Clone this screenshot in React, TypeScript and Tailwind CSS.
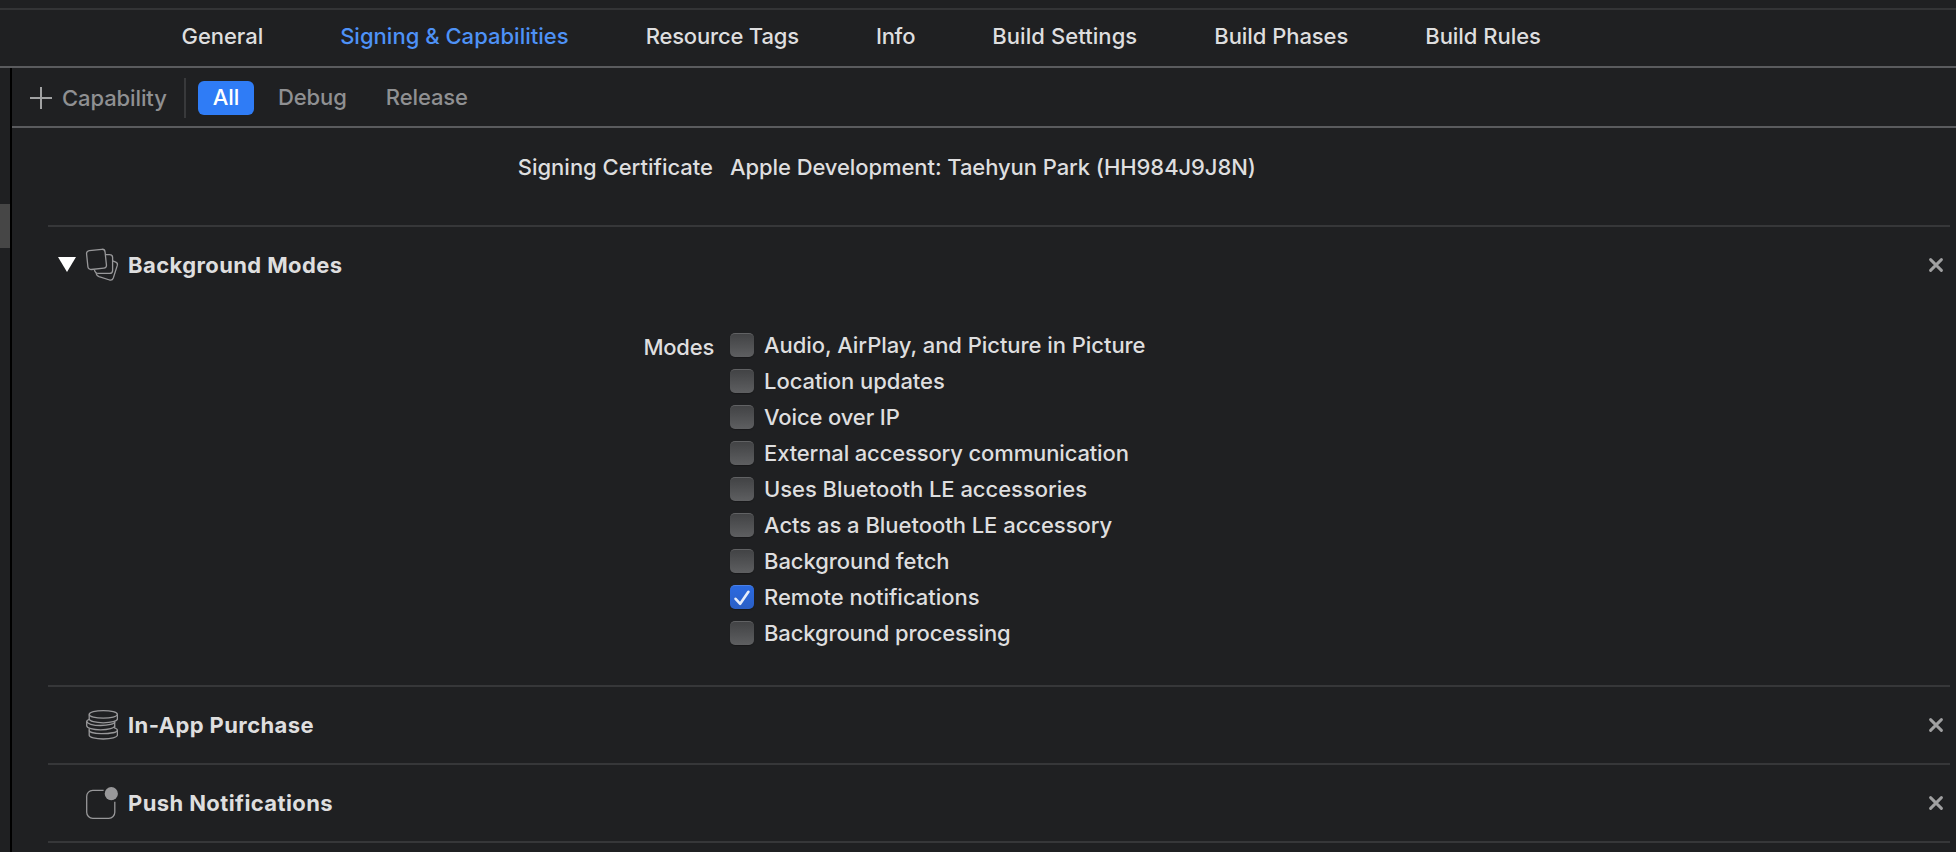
import { useState, type ReactNode } from 'react'
import clsx from 'clsx'

const tabs = [
  { label: 'General', className: 'tracking-[-0.05px]' },
  { label: 'Signing & Capabilities', className: 'tracking-[0.02px]' },
  { label: 'Resource Tags', className: 'tracking-[-0.18px]' },
  { label: 'Info', className: 'tracking-[-0.25px]' },
  { label: 'Build Settings', className: 'tracking-[0.08px]' },
  { label: 'Build Phases', className: 'tracking-[-0.06px]' },
  { label: 'Build Rules', className: 'tracking-[-0.04px]' },
]

const modes = [
  { label: 'Audio, AirPlay, and Picture in Picture', className: 'tracking-[-0.05px]' },
  { label: 'Location updates', className: 'tracking-[-0.05px]' },
  { label: 'Voice over IP', className: 'tracking-[-0.12px]' },
  { label: 'External accessory communication', className: 'tracking-[-0.14px]' },
  { label: 'Uses Bluetooth LE accessories', className: 'tracking-[-0.03px]' },
  { label: 'Acts as a Bluetooth LE accessory', className: 'tracking-[-0.03px]' },
  { label: 'Background fetch', className: 'tracking-[-0.05px]' },
  { label: 'Remote notifications', className: 'tracking-[-0.03px]' },
  { label: 'Background processing', className: 'tracking-[-0.12px]' },
]

function CardsIcon() {
  return (
    <svg width="32" height="32" viewBox="0 0 32 32" fill="none" stroke="#98989a" strokeWidth="1.3" className="overflow-visible">
      <rect x="1.2" y="0.9" width="18.6" height="19" rx="3" transform="rotate(-6 10.5 10.4)" />
      <path d="M20 5.6h3.6a3 3 0 0 1 3 3v12.8a3 3 0 0 1-3 3H12.4Q9.2 24.4 8.4 20.8" />
      <path d="M26.6 11.8l3.2 1.3Q32 14 31.3 16.4L27.3 29Q26.3 31.7 23.6 31L13 27.6Q10.8 26.8 10 24.2" />
    </svg>
  )
}

function CoinsIcon() {
  return (
    <svg width="32" height="32" viewBox="0 0 32 32" fill="none" stroke="#98989a" strokeWidth="1.3">
      <ellipse cx="17.3" cy="5.4" rx="14.1" ry="3.8" />
      <path d="M3.2 5.4v4.6c0 2.1 6.3 3.8 14.1 3.8s14.1-1.7 14.1-3.8V5.4" />
      <path d="M3.2 10.3C1.5 10.9.7 11.6.7 12.3c0 2.3 6.2 4.2 13.9 4.2s14.1-1.7 14.1-3.6" />
      <path d="M.7 12.3v4.5c0 2.3 6.2 4.1 13.9 4.1s14.1-1.8 14.1-4.1v-4" />
      <path d="M3.2 19.5v2c0 1.8 5.6 3.1 12 3.1 8.7 0 16.2-1.3 16.2-3.4 0-1-1-1.7-2.7-2.2v-2.2" />
      <path d="M3.2 21.5v4.7c0 2.1 6.3 3.8 14.1 3.8s14.1-1.7 14.1-3.8v-5" />
    </svg>
  )
}

function BadgeIcon() {
  return (
    <svg width="32" height="32" viewBox="0 0 32 32" fill="none" stroke="#98989a" strokeWidth="1.3">
      <path d="M17.6 3.4H6.7a6 6 0 0 0-6 6v15.9a6 6 0 0 0 6 6h16.1a6 6 0 0 0 6-6V14.8" />
      <circle cx="25.3" cy="6.7" r="6.6" fill="#98989a" stroke="none" />
    </svg>
  )
}

interface CheckboxProps {
  label: string
  className?: string
  checked: boolean
  onChange: () => void
}

function Checkbox({ label, className, checked, onChange }: CheckboxProps) {
  return (
    <button role="checkbox" aria-checked={checked} onClick={onChange} className="flex h-9 items-center gap-[10px]">
      <span
        className={clsx(
          'flex size-6 items-center justify-center rounded-[5px] border-t shadow-[0_1px_1px_rgba(0,0,0,0.25)]',
          checked
            ? 'border-[#4a80e6] bg-linear-to-b from-[#2b6ae0] to-[#2a5fc6]'
            : 'border-[#616264] bg-linear-to-b from-[#424345] to-[#5e5f61]'
        )}
      >
        {checked && (
          <svg width="16" height="16" viewBox="0 0 16 16" fill="none" stroke="#e6edfa" strokeWidth="2.6" strokeLinecap="round" strokeLinejoin="round">
            <path d="M1.6 8.8l4.6 5L14.4 1.8" />
          </svg>
        )}
      </span>
      <span className={className}>{label}</span>
    </button>
  )
}

interface CapabilityProps {
  title: string
  icon: ReactNode
  expanded?: boolean
  children?: ReactNode
}

function Capability({ title, icon, expanded, children }: CapabilityProps) {
  return (
    <section className="border-t-2 border-[#363739]">
      <header className="flex h-[76px] items-center pr-[7px] pl-[10px]">
        <span className="w-7">
          {expanded && (
            <svg width="18" height="15" viewBox="0 0 18 15" fill="#fff" className="mb-0.5">
              <path d="M0 0h18L9 15z" />
            </svg>
          )}
        </span>
        {icon}
        <h2 className="ml-[10px] font-bold tracking-[0.4px]">{title}</h2>
        <button aria-label={`Remove ${title}`} className="ml-auto">
          <svg width="14" height="14" viewBox="0 0 14 14" stroke="#a0a0a1" strokeWidth="2.9" strokeLinecap="round">
            <path d="M1.6 1.6l10.8 10.8M12.4 1.6L1.6 12.4" />
          </svg>
        </button>
      </header>
      {children}
    </section>
  )
}

export default function App() {
  const [enabled, setEnabled] = useState(['Remote notifications'])

  const toggle = (mode: string) => {
    setEnabled((prev) => (prev.includes(mode) ? prev.filter((m) => m !== mode) : [...prev, mode]))
  }

  return (
    <div className="flex h-screen flex-col overflow-hidden bg-[#1f2022] font-['Inter','Liberation_Sans',sans-serif] text-[22px] leading-7 font-[450] whitespace-nowrap text-[#dededf]">
      <nav className="mt-2 flex h-[60px] shrink-0 items-center gap-[77px] border-y-2 border-t-[#333436] border-b-[#5a5b5e] pb-1 pl-[181.5px]">
        {tabs.map((tab) => (
          <button
            key={tab.label}
            className={clsx(tab.className, tab.label === 'Signing & Capabilities' && 'text-[#4e92f7]')}
          >
            {tab.label}
          </button>
        ))}
      </nav>

      <div className="flex min-h-0 flex-1">
        {/* Edge of the targets list with the selected row */}
        <aside className="w-[10px] shrink-0 pt-[136px]">
          <div className="h-11 bg-[#464646]" />
        </aside>

        <main className="min-w-0 flex-1 border-l-2 border-black">
          <div className="flex h-[60px] items-center border-b-2 border-[#5a5b5e] text-[#8f9092]">
            <button className="flex w-[154px] items-center gap-[10px] pt-0.5 pl-[18px] tracking-[-0.1px]">
              <svg width="22" height="22" viewBox="0 0 22 22" stroke="#a1a2a3" strokeWidth="2" className="shrink-0">
                <path d="M11 0v22M0 11h22" />
              </svg>
              Capability
            </button>
            <div className="mt-0.5 ml-[18px] h-10 w-0.5 bg-[#38393b]" />
            <button className="mt-0.5 ml-3 h-[34px] w-14 rounded-md bg-[#2f7cf6] pb-0.5 font-medium text-white">All</button>
            <button className="ml-6 tracking-[-0.1px]">Debug</button>
            <button className="ml-[39px] tracking-[-0.1px]">Release</button>
          </div>

          <div className="pr-1.5 pl-9">
            <div className="flex gap-[17px] pt-[25px] pb-11">
              <span className="w-[665px] text-right tracking-[-0.01px]">Signing Certificate</span>
              <span className="tracking-[-0.08px]">Apple Development: Taehyun Park (HH984J9J8N)</span>
            </div>

            <Capability title="Background Modes" icon={<CardsIcon />} expanded>
              <div className="flex gap-4 pt-6 pb-[34px]">
                <span className="w-[666px] pt-1.5 text-right tracking-[-0.25px]">Modes</span>
                <div>
                  {modes.map((mode) => (
                    <Checkbox
                      key={mode.label}
                      {...mode}
                      checked={enabled.includes(mode.label)}
                      onChange={() => toggle(mode.label)}
                    />
                  ))}
                </div>
              </div>
            </Capability>
            <Capability title="In-App Purchase" icon={<CoinsIcon />} />
            <Capability title="Push Notifications" icon={<BadgeIcon />} />
            <div className="border-t-2 border-[#363739]" />
          </div>
        </main>
      </div>
    </div>
  )
}
